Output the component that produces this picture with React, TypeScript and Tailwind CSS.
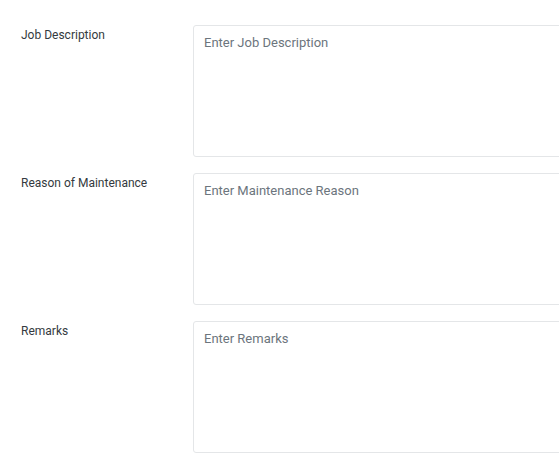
import React from 'react';

const fields = [
  { label: 'Job Description', placeholder: 'Enter Job Description' },
  { label: 'Reason of Maintenance', placeholder: 'Enter Maintenance Reason' },
  { label: 'Remarks', placeholder: 'Enter Remarks' },
];

export default function App() {
  return (
    <div className="w-[559px] h-[461px] bg-white overflow-hidden font-['Roboto',sans-serif]">
      <div className="pt-[25px] flex flex-col gap-[16px]">
        {fields.map((f) => (
          <div key={f.label} className="flex">
            <label className="w-[193px] shrink-0 pl-[21px] pt-[1px] text-[12px] leading-[18px] text-[#343a40]">
              {f.label}
            </label>
            <textarea
              placeholder={f.placeholder}
              className="w-[420px] shrink-0 h-[132px] resize-none rounded-[3px] border border-[#e4e6e8] bg-white px-[10px] py-[7px] text-[13px] leading-[20px] text-[#495057] placeholder:text-[#6c757d] outline-none"
            />
          </div>
        ))}
      </div>
    </div>
  );
}
